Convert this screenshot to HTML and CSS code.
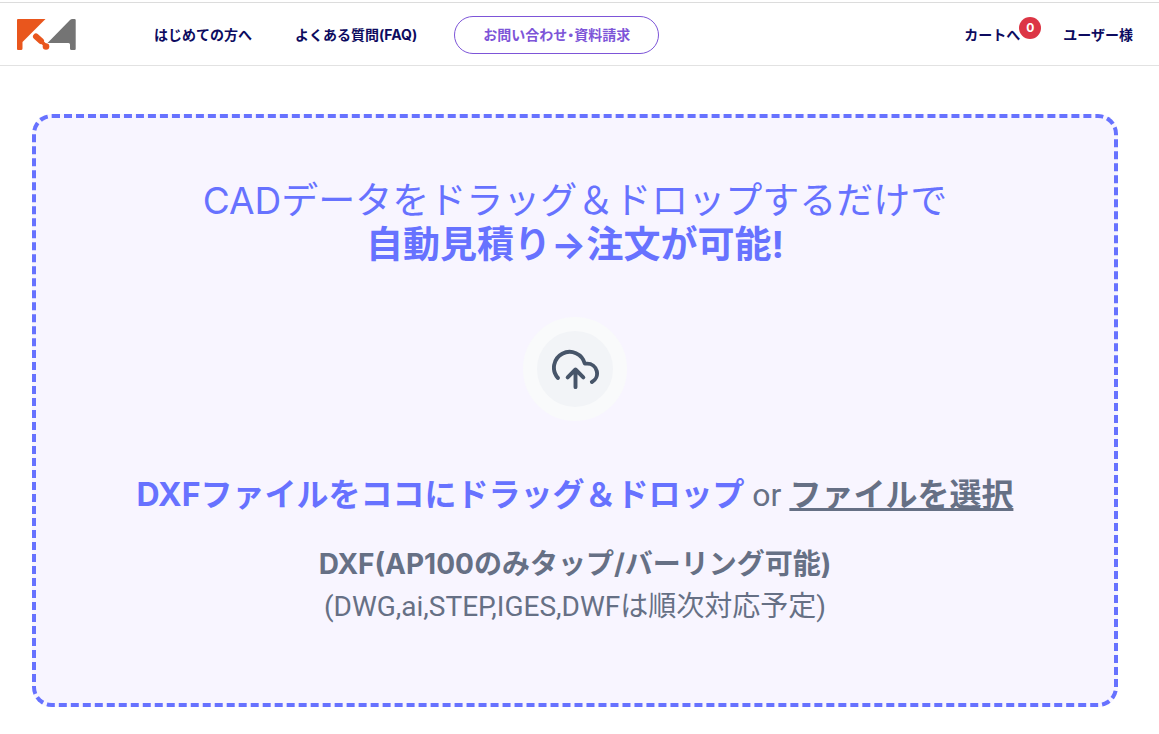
FILE: index.html
```html
<!DOCTYPE html>
<html lang="ja">
<head>
<meta charset="utf-8">
<meta name="viewport" content="width=device-width, initial-scale=1">
<title>自動見積り</title>
<link rel="stylesheet" href="styles.css">
</head>
<body>
<header class="header">
  <a class="logo" href="#" aria-label="ホーム">
    <svg width="60" height="32" viewBox="0 0 60 32" aria-hidden="true">
      <path fill="#e9561d" d="M2 0H29.500L6.500 23V29.500Q6.500 31 5 31H2Q1 31 1 30V1Q1 0 2 0Z"/>
      <path d="M20 17.500L25 22" stroke="#e9561d" stroke-width="6" stroke-linecap="round"/>
      <path d="M25 22L30 27" stroke="#e9561d" stroke-width="3.500"/>
      <circle cx="30" cy="27.500" r="3.300" fill="#e9561d"/>
      <path fill="#747474" d="M31.500 24L54 1Q55 0 56.500 0H58.500Q59.700 0 59.700 1V30Q59.700 31 58.500 31H55.500Q54 31 54 29.500V25.500Q54 24 52.500 24Z"/>
    </svg>
  </a>
  <nav class="nav">
    <a class="nav-link" href="#">はじめての方へ</a>
    <a class="nav-link" href="#">よくある質問(FAQ)</a>
    <a class="contact" href="#">お問い合わせ・資料請求</a>
  </nav>
  <div class="account">
    <a class="nav-link cart" href="#">カートへ<span class="badge">0</span></a>
    <a class="nav-link" href="#">ユーザー様</a>
  </div>
</header>
<main class="main">
  <section class="dropzone">
    <h1 class="title">CADデータをドラッグ＆ドロップするだけで<br><strong>自動見積り→注文が可能!</strong></h1>
    <div class="upload-icon">
      <svg width="47" height="47" viewBox="0 0 24 24" fill="none" stroke="#475569" stroke-width="2" stroke-linecap="round" stroke-linejoin="round" aria-hidden="true">
        <path d="M16 16L12 12L8 16M12 12V21"/>
        <path d="M20.390 18.390A5 5 0 0 0 18 9H16.740A8 8 0 1 0 3 16.300"/>
      </svg>
    </div>
    <p class="prompt"><strong class="accent">DXFファイルをココにドラッグ＆ドロップ</strong> or <button class="select-file" type="button">ファイルを選択</button></p>
    <p class="formats"><strong>DXF(AP100のみタップ/バーリング可能)</strong><br>(DWG,ai,STEP,IGES,DWFは順次対応予定)</p>
  </section>
</main>
</body>
</html>
```
FILE: styles.css
```css
* {
  box-sizing: border-box;
}

body {
  margin: 0;
  padding-top: 2px;
  background: #fff;
  color: #667085;
  font-family: Inter, "Noto Sans CJK JP", sans-serif;
}

strong {
  font-family: Inter, "Noto Sans CJK JP", sans-serif;
}

.header {
  display: flex;
  align-items: center;
  height: 64px;
  padding: 1px 26px 0 16px;
  border-top: 1px solid #dcdcdc;
  border-bottom: 1px solid #e2e2e2;
  font-size: 14px;
  line-height: 20px;
}

.logo {
  display: flex;
  margin-right: 78px;
}

.nav,
.account {
  display: flex;
  align-items: center;
  white-space: nowrap;
}

.nav-link {
  color: #0d0b60;
  font-weight: 700;
  text-decoration: none;
}

.nav .nav-link {
  margin-right: 43px;
}

.nav .nav-link + .nav-link {
  margin-right: 37px;
}

.contact {
  padding: 8px 28px;
  border: 1px solid #7d55d8;
  border-radius: 20px;
  color: #7d55d8;
  font-feature-settings: "halt";
  font-weight: 700;
  text-decoration: none;
}

.account {
  gap: 43px;
  margin-left: auto;
}

.cart {
  position: relative;
}

.badge {
  position: absolute;
  right: -21px;
  bottom: 6px;
  width: 22px;
  height: 22px;
  border-radius: 50%;
  background: #dc3545;
  color: #fff;
  font-size: 12px;
  line-height: 22px;
  text-align: center;
}

.main {
  padding: 48px 41px 27px 32px;
}

.dropzone {
  display: flex;
  flex-direction: column;
  align-items: center;
  padding: 61px 16px 75px;
  border: 4px dashed #6772ff;
  border-radius: 20px;
  background: #f8f5ff;
  text-align: center;
}

.title {
  margin: 0;
  color: #6772ff;
  font-size: 37px;
  font-weight: 400;
  line-height: 44px;
}

.upload-icon {
  display: grid;
  place-items: center;
  width: 104px;
  height: 104px;
  margin: 50px 0;
  border: 14px solid #f9fafb;
  border-radius: 50%;
  background: #f2f4f7;
}

.prompt {
  margin: 0;
  font-family: Roboto, "Noto Sans CJK JP", sans-serif;
  font-size: 32px;
  line-height: 48px;
}

.accent {
  color: #6772ff;
}

.select-file {
  padding: 0;
  border: 0;
  background: none;
  color: inherit;
  font: inherit;
  font-weight: 700;
  text-decoration: underline 3px;
  text-decoration-skip-ink: none;
  cursor: pointer;
}

.formats {
  margin: 24px 0 0;
  font-family: Roboto, "Noto Sans CJK JP", sans-serif;
  font-size: 28px;
  line-height: 42px;
}
```
